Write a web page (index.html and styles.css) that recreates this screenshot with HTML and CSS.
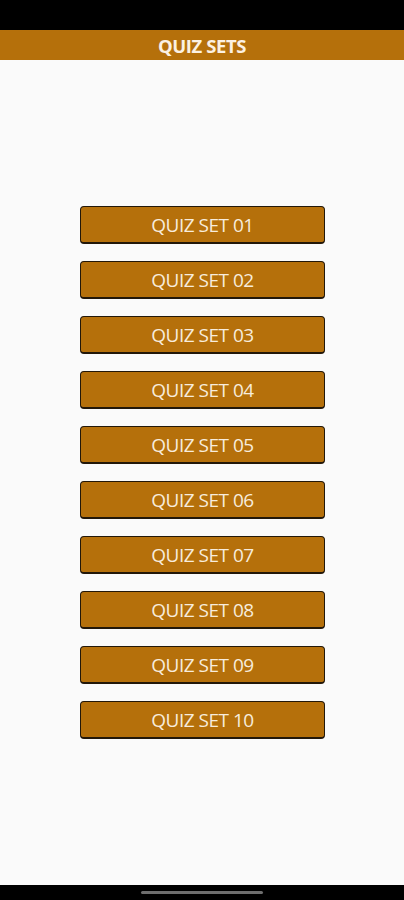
FILE: index.html
```html
<!DOCTYPE html>
<html>
<head>
<meta charset="utf-8">
<link rel="stylesheet" href="styles.css">
</head>
<body>
<div class="status"></div>
<header class="appbar">QUIZ SETS</header>
<main class="content">
  <button class="quiz">QUIZ SET 01</button>
  <button class="quiz">QUIZ SET 02</button>
  <button class="quiz">QUIZ SET 03</button>
  <button class="quiz">QUIZ SET 04</button>
  <button class="quiz">QUIZ SET 05</button>
  <button class="quiz">QUIZ SET 06</button>
  <button class="quiz">QUIZ SET 07</button>
  <button class="quiz">QUIZ SET 08</button>
  <button class="quiz">QUIZ SET 09</button>
  <button class="quiz">QUIZ SET 10</button>
</main>
<footer class="navbar"><div class="handle"></div></footer>
</body>
</html>
```
FILE: styles.css
```css
html, body {
  margin: 0;
  padding: 0;
}
body {
  width: 404px;
  height: 900px;
  background: #fafafa;
  display: flex;
  flex-direction: column;
  font-family: "Open Sans", "Noto Sans", sans-serif;
}
.status {
  height: 30px;
  background: #000;
  flex: none;
}
.appbar {
  height: 30px;
  flex: none;
  background: #b5700b;
  color: #fbf1e3;
  font-weight: 700;
  font-size: 18.5px;
  letter-spacing: -0.4px;
  display: flex;
  align-items: center;
  justify-content: center;
}
.content {
  flex: 1;
  display: flex;
  flex-direction: column;
  align-items: center;
  gap: 17px;
  padding-top: 146px;
  padding-left: 1px;
}
.quiz {
  width: 245px;
  height: 38px;
  box-sizing: border-box;
  background: #b5700b;
  border: 1.5px solid #221709;
  border-bottom-width: 2px;
  border-radius: 4px;
  color: #f7ecdc;
  font-family: "Open Sans", "Noto Sans", sans-serif;
  font-size: 19px;
  letter-spacing: -0.5px;
  padding: 0;
  display: flex;
  align-items: center;
  justify-content: center;
}
.navbar {
  height: 15px;
  flex: none;
  background: #000;
  display: flex;
  justify-content: center;
  padding-top: 6px;
  box-sizing: border-box;
}
.handle {
  width: 122px;
  height: 3px;
  border-radius: 2px;
  background: #6e6e6e;
}
```
